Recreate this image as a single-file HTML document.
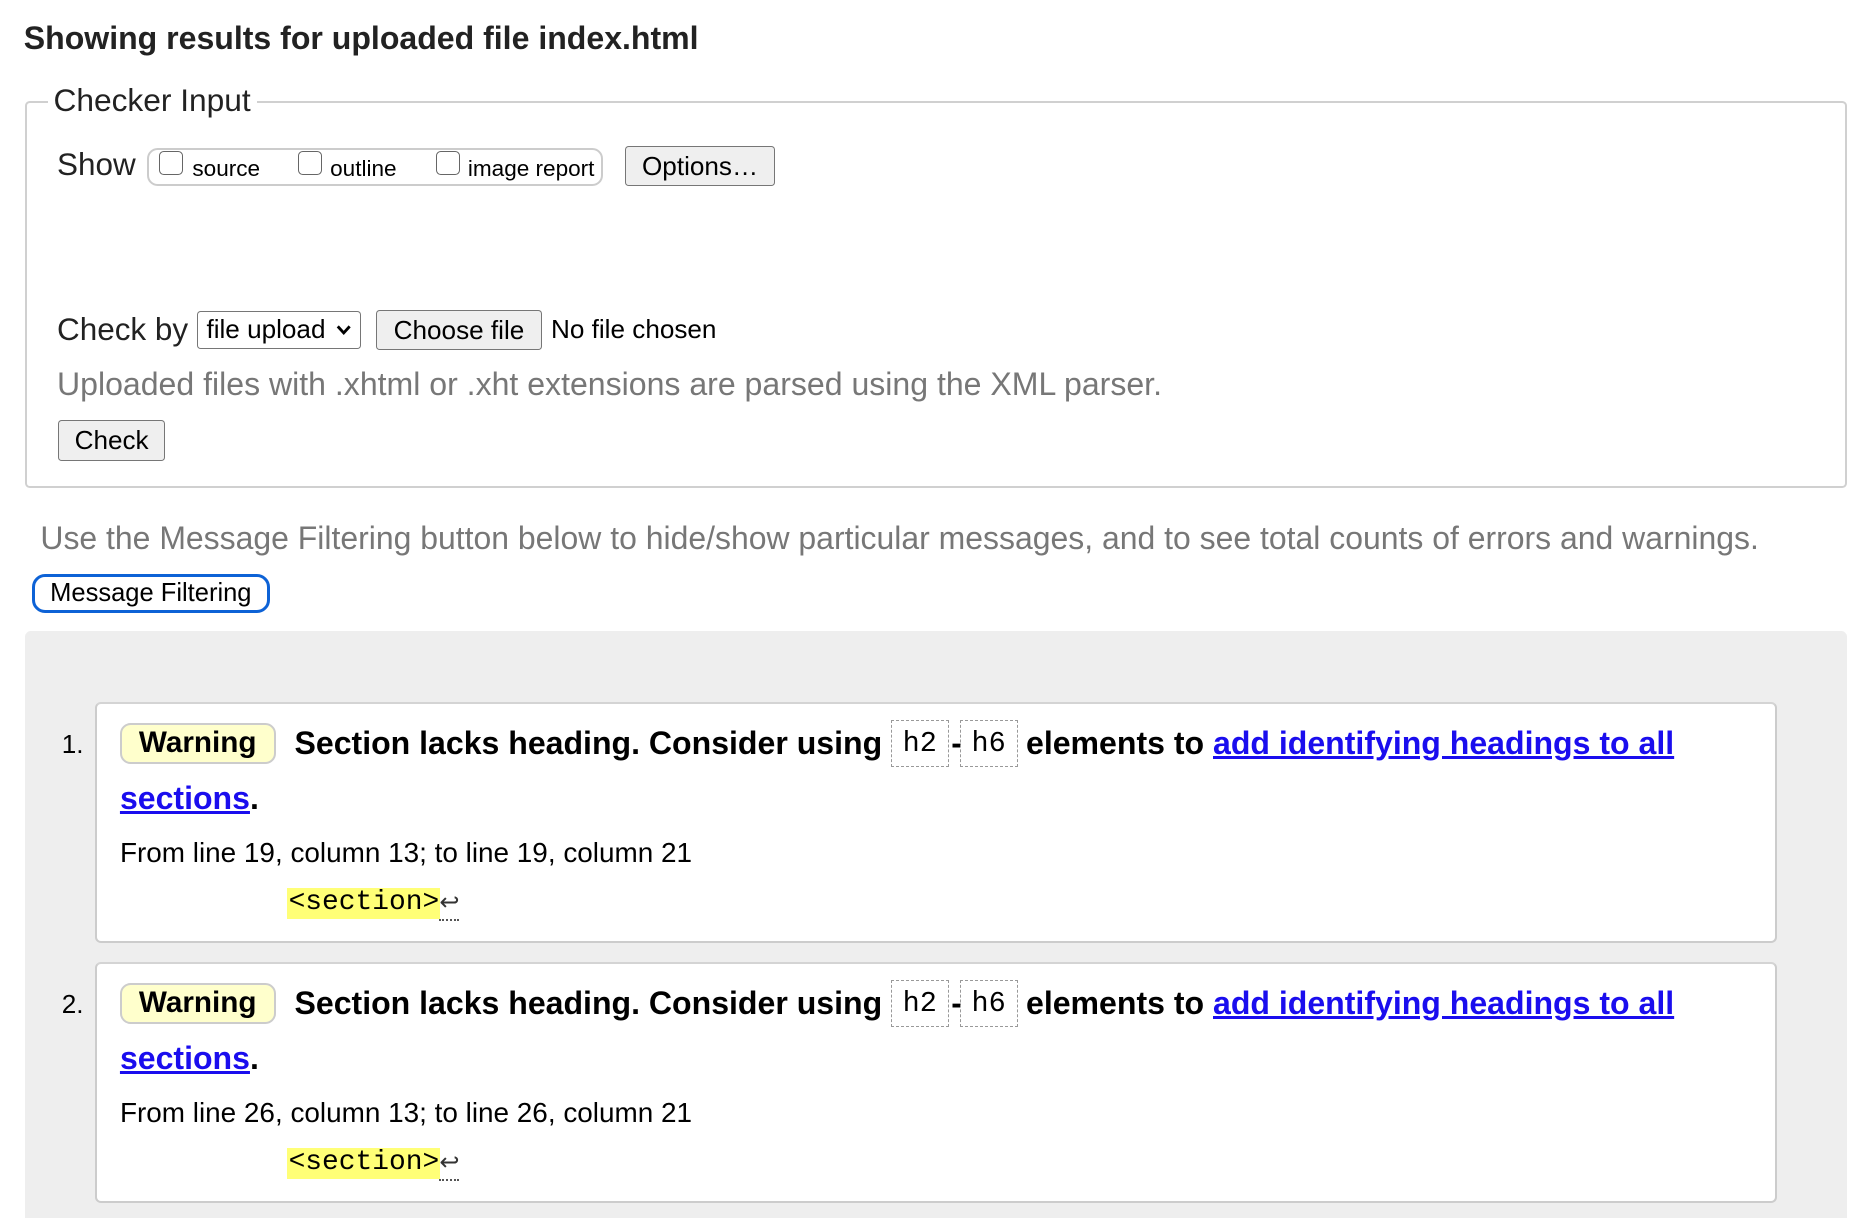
<!DOCTYPE html>
<html><head><meta charset="utf-8"><style>
html,body{margin:0;padding:0;background:#fff;overflow:hidden}
body{width:1862px;height:1218px}
#w{zoom:1.1875;width:1568px;height:1026px;position:relative;font-family:"Liberation Sans",Arial,sans-serif;color:#000}
.a{position:absolute;white-space:nowrap}
.t{line-height:30px}
.btn{position:absolute;box-sizing:border-box;border:1px solid #767676;border-radius:3px;background:#efefef;font-size:22px;display:flex;align-items:center;justify-content:center}
.cb{display:inline-block;width:20px;height:20px;border:1.5px solid #666;border-radius:4px;box-sizing:border-box;position:absolute;top:0}
.item{position:absolute;left:80px;width:1416px;height:203px;background:#fff;border:2px solid #ccc;border-top-color:#d4d4d4;border-radius:5px;box-sizing:border-box}
.warn{position:absolute;box-sizing:border-box;background:#ffffcc;border:2px solid #ccc;border-radius:9px;font-weight:bold;font-size:25px;display:flex;align-items:center;justify-content:center}
.code{position:absolute;box-sizing:border-box;border:1.5px dashed #999;font-family:"Liberation Mono",monospace;font-size:24px;display:flex;align-items:center;justify-content:center}
.b{font-weight:bold;font-size:27px}
a{color:#1a0dee;text-decoration:underline}
.sec{position:absolute;background:#ffff77;font-family:"Liberation Mono",monospace;font-size:23.5px;line-height:26px;padding:0 1px}
</style></head><body><div id="w">
<div class="a t" style="left:20px;top:18px;font-size:27px;font-weight:bold;color:#222">Showing results for uploaded file index.html</div>

<div class="a" style="left:21px;top:85px;width:1534px;height:326px;border:2px solid #d0d0d0;border-radius:4px;box-sizing:border-box"></div>
<div class="a t" style="left:40px;top:70px;font-size:26.7px;background:#fff;padding:0 5px;color:#222">Checker Input</div>

<div class="a t" style="left:48px;top:124px;font-size:26.5px;color:#222">Show</div>
<div class="a" style="left:124px;top:125px;width:384px;height:32px;border:2px solid #ccc;border-radius:9px;box-sizing:border-box"></div>
<div class="a" style="left:134px;top:127px;font-size:19px;line-height:28px">
 <span class="cb" style="left:0"></span><span style="position:absolute;left:28px;top:1px">source</span>
 <span class="cb" style="left:117px"></span><span style="position:absolute;left:144px;top:1px">outline</span>
 <span class="cb" style="left:233px"></span><span style="position:absolute;left:260px;top:1px">image report</span>
</div>
<div class="btn" style="left:526px;top:123px;width:127px;height:34px;font-size:22px">Options…</div>

<div class="a t" style="left:48px;top:263px;font-size:26.5px;color:#222;letter-spacing:0">Check by</div>
<div class="a" style="left:166px;top:262px;width:138px;height:32px;border:1px solid #767676;border-radius:3px;box-sizing:border-box;font-size:22px;line-height:30px;padding-left:7px">file upload<svg style="position:absolute;right:7px;top:10px" width="13" height="10" viewBox="0 0 13 10"><path d="M1.5 2 L6.5 7.5 L11.5 2" fill="none" stroke="#000" stroke-width="2.4"/></svg></div>
<div class="btn" style="left:317px;top:261px;width:139px;height:34px">Choose file</div>
<div class="a t" style="left:464px;top:263px;font-size:22px">No file chosen</div>
<div class="a t" style="left:48px;top:309px;font-size:27px;color:#777">Uploaded files with .xhtml or .xht extensions are parsed using the XML parser.</div>
<div class="btn" style="left:49px;top:354px;width:90px;height:34px">Check</div>

<div class="a t" style="left:34px;top:439px;font-size:26.9px;color:#777">Use the Message Filtering button below to hide/show particular messages, and to see total counts of errors and warnings.</div>
<div class="a" style="left:27px;top:483px;width:200px;height:33px;border:3px solid #0d62d6;border-radius:11px;box-sizing:border-box;font-size:21.5px;line-height:27px;text-align:center">Message Filtering</div>

<div class="a" style="left:21px;top:531px;width:1534px;height:520px;background:#eeeeee;border-radius:5px"></div>

<div class="item" style="top:591px"></div>
<div class="a t" style="left:52px;top:612px;font-size:22px">1.</div>
<div class="warn" style="left:101px;top:609px;width:131px;height:34px">Warning</div>
<div class="a t b" style="left:248px;top:611px">Section lacks heading. Consider using</div>
<div class="code" style="left:750px;top:606px;width:49px;height:40px">h2</div>
<div class="a t b" style="left:801px;top:611px">-</div>
<div class="code" style="left:808px;top:606px;width:49px;height:40px">h6</div>
<div class="a t b" style="left:864px;top:611px">elements to <a>add identifying headings to all</a></div>
<div class="a t b" style="left:101px;top:658px"><a>sections</a>.</div>
<div class="a t" style="left:101px;top:703px;font-size:23.5px">From line 19, column 13; to line 19, column 21</div>
<div class="sec" style="left:242px;top:748px">&lt;section&gt;</div>
<div class="a" style="left:370px;top:748px;font-size:20px;line-height:26px;color:#333;border-bottom:2px dotted #555">↩</div>

<div class="item" style="top:810px"></div>
<div class="a t" style="left:52px;top:831px;font-size:22px">2.</div>
<div class="warn" style="left:101px;top:828px;width:131px;height:34px">Warning</div>
<div class="a t b" style="left:248px;top:830px">Section lacks heading. Consider using</div>
<div class="code" style="left:750px;top:825px;width:49px;height:40px">h2</div>
<div class="a t b" style="left:801px;top:830px">-</div>
<div class="code" style="left:808px;top:825px;width:49px;height:40px">h6</div>
<div class="a t b" style="left:864px;top:830px">elements to <a>add identifying headings to all</a></div>
<div class="a t b" style="left:101px;top:877px"><a>sections</a>.</div>
<div class="a t" style="left:101px;top:922px;font-size:23.5px">From line 26, column 13; to line 26, column 21</div>
<div class="sec" style="left:242px;top:967px">&lt;section&gt;</div>
<div class="a" style="left:370px;top:967px;font-size:20px;line-height:26px;color:#333;border-bottom:2px dotted #555">↩</div>
</div></body></html>
